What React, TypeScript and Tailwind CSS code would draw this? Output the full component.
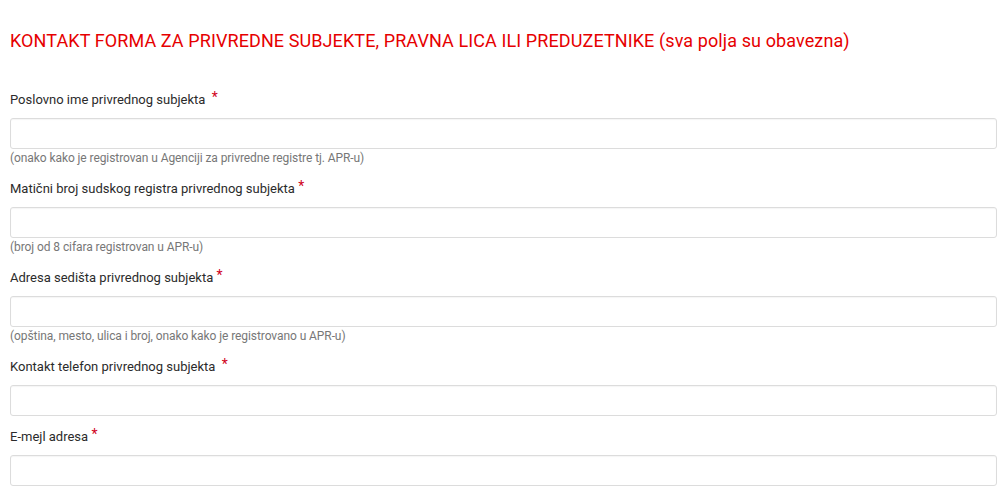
import React from 'react';

const fields = [
  { label: 'Poslovno ime privrednog subjekta', gap: true, help: '(onako kako je registrovan u Agenciji za privredne registre tj. APR-u)' },
  { label: 'Matični broj sudskog registra privrednog subjekta', gap: false, help: '(broj od 8 cifara registrovan u APR-u)' },
  { label: 'Adresa sedišta privrednog subjekta', gap: false, help: '(opština, mesto, ulica i broj, onako kako je registrovano u APR-u)' },
  { label: 'Kontakt telefon privrednog subjekta', gap: true, help: '' },
  { label: 'E-mejl adresa', gap: false, help: '' },
];

export default function App() {
  return (
    <div className="bg-white min-h-[496px] pl-[10px] pr-[3px] pt-[30px] font-['Roboto',sans-serif]">
      <h1 className="text-[18px] leading-[22px] tracking-[0.1px] text-[#e60000] mb-[38px]">
        KONTAKT FORMA ZA PRIVREDNE SUBJEKTE, PRAVNA LICA ILI PREDUZETNIKE (sva polja su obavezna)
      </h1>
      {fields.map((f) => (
        <div key={f.label} className="mb-[11px]">
          <label className="block h-[20px] text-[13px] leading-[20px] text-[#2b2b2b] mb-[8px]">
            {f.label}
            {f.gap ? '\u00a0 ' : ' '}
            <span className="text-[14px] leading-none text-[#d0021b] relative -top-[2px]">*</span>
          </label>
          <input
            type="text"
            className="block w-full h-[31px] border border-[#dcdcdc] rounded-[3px] shadow-[inset_0_1px_1px_rgba(0,0,0,0.04)] bg-white outline-none"
          />
          {f.help && (
            <div className="text-[12px] leading-[19px] tracking-[-0.08px] text-[#777]">{f.help}</div>
          )}
        </div>
      ))}
    </div>
  );
}
